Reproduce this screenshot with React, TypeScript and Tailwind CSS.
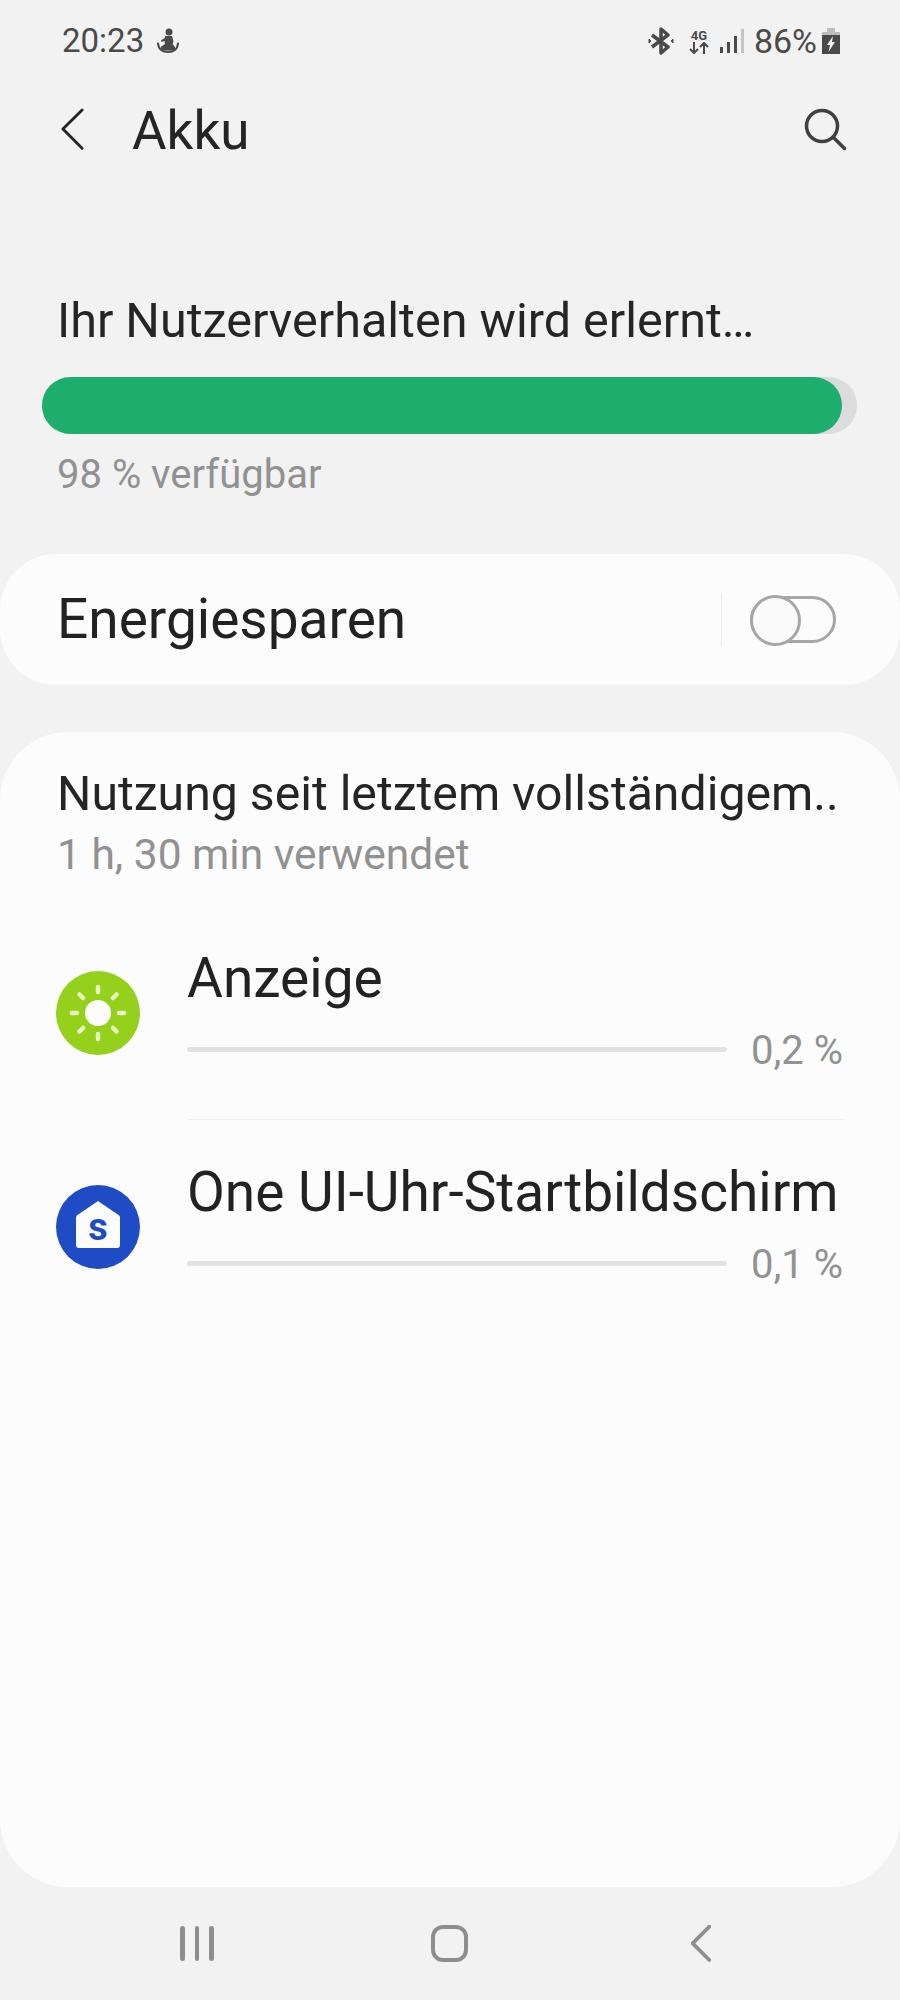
const Back = ({ className, width, stroke = 3 }: { className: string; width: number; stroke?: number }) => (
  <svg viewBox="0 0 24 44" width={width} className={className} fill="none" stroke="currentColor" strokeWidth={stroke} strokeLinecap="round" strokeLinejoin="round">
    <path d="M22 2 2 22l20 20" />
  </svg>
)

const StatusBar = () => (
  <div className="flex h-[61px] items-end justify-between pl-[62px] pr-[60px] text-[#4a4a4a]">
    <div className="flex items-center gap-[13px]">
      <span className="text-[33px] leading-[40px]">20:23</span>
      <svg viewBox="0 0 22 26" width="22" height="26" fill="currentColor">
        <circle cx="12" cy="4" r="3.500" />
        <path d="M8 8h7l1.500 5.500-1 2.500 2.500 3 .5 3.500H5L3.500 19l4.500-3-.5-3-3 1-.5-1.800L8 10z" />
        <path d="M1 15.500c.3 5 4 8.500 10 8.500s9.700-3.500 10-8.500" fill="none" stroke="currentColor" strokeWidth="2.200" strokeLinecap="round" />
      </svg>
    </div>
    <div className="flex items-center">
      <svg viewBox="0 0 26 28" width="26" height="28" fill="none" stroke="currentColor" strokeWidth="3.500" className="mr-[15px]">
        <path d="m4 8 16 12-7 6V2l7 6L4 20" strokeLinejoin="round" />
        <path d="M1 12v4l2-2zM25 12v4l-2-2z" fill="currentColor" strokeWidth="1" />
      </svg>
      <div className="mr-[11px] flex w-[20px] flex-col items-center">
        <span className="text-[13px] font-bold leading-[13px]">4G</span>
        <svg viewBox="0 0 20 12" width="20" height="12" fill="none" stroke="currentColor" strokeWidth="2">
          <path d="M5 0v11M1 7l4 4 4-4M15 12V1M11 5l4-4 4 4" />
        </svg>
      </div>
      <svg viewBox="0 0 24 24" width="24" height="24" className="mr-[10px]">
        <rect x="0" y="18" width="3" height="6" fill="currentColor" />
        <rect x="7" y="13" width="3" height="11" fill="currentColor" />
        <rect x="14" y="7" width="3" height="17" fill="currentColor" />
        <rect x="21" y="0" width="3" height="24" fill="#c4c4c4" />
      </svg>
      <span className="text-[34px] leading-[40px]">86%</span>
      <svg viewBox="0 0 18 26" width="18" height="26" className="ml-[5px]">
        <path d="M5 0h8v4h5v3H0V4h5z" fill="#bdbdbd" />
        <path d="M0 7h18v19H0z" fill="currentColor" />
        <path d="M11 8 5 17h3l-1.500 7L13 14h-3z" fill="#f2f2f2" />
      </svg>
    </div>
  </div>
)

const UsageRow = ({ icon, label, value }: { icon: React.ReactNode; label: string; value: string }) => (
  <div className="flex items-center">
    <div className="w-[187px] shrink-0 pl-[56px] pt-[5px]">{icon}</div>
    <div className="flex-1 pr-[57px]">
      <div className="text-[55px] leading-[60px] whitespace-nowrap text-[#222]">{label}</div>
      <div className="mt-[21px] flex items-center justify-between">
        <div className="mb-[4px] h-[5px] w-[540px] rounded-full bg-[#e2e2e2]" />
        <span className="text-[40px] leading-[44px] text-[#929292]">{value}</span>
      </div>
    </div>
  </div>
)

const SunIcon = () => (
  <svg viewBox="0 0 84 84" width="84" height="84">
    <circle cx="42" cy="42" r="42" fill="#95d01c" />
    <circle cx="42" cy="42" r="13" fill="#fcfcfc" />
    <g stroke="#e6f5bf" strokeWidth="4.500" strokeLinecap="round">
      <path d="M42 16v5M42 63v5M16 42h5M63 42h5M23.500 23.500l3.500 3.500M57 57l3.500 3.500M23.500 60.500 27 57M57 27l3.500-3.500" />
    </g>
  </svg>
)

const HomeIcon = () => (
  <div className="relative h-[84px] w-[84px]">
    <svg viewBox="0 0 84 84" width="84" height="84">
      <circle cx="42" cy="42" r="42" fill="#1f4cc4" />
      <path d="M42 16 21.500 30c-1 .8-1.500 1.700-1.500 3v27c0 2 1 3 3 3h38c2 0 3-1 3-3V33c0-1.300-.5-2.200-1.500-3z" fill="#fcfcfc" />
    </svg>
    <span className="absolute inset-x-0 top-[20px] text-center text-[38px] font-bold leading-[44px] text-[#1f4cc4]">s</span>
  </div>
)

export default function App() {
  return (
    <div className="flex h-[2000px] w-[900px] flex-col overflow-hidden bg-[#f2f2f2] font-['Roboto',sans-serif]">
      <StatusBar />
      <div className="mt-[40px] flex h-[60px] items-center justify-between pl-[61px] pr-[53px]">
        <div className="flex items-center">
          <Back width={23} className="mb-[3px] text-[#252525]" />
          <h1 className="ml-[48px] text-[53px] leading-[60px] text-[#252525]">Akku</h1>
        </div>
        <svg viewBox="0 0 44 44" width="44" height="44" fill="none" stroke="#404040" strokeWidth="3.500" strokeLinecap="round" className="mb-[4px]">
          <circle cx="19" cy="19" r="15.500" />
          <path d="m30.500 30.500 11 11" />
        </svg>
      </div>
      <div className="mt-[134px] px-[57px] text-[48.500px] leading-[52px] whitespace-nowrap text-[#252525]">Ihr Nutzerverhalten wird erlernt…</div>
      <div className="mx-[42px] mt-[30px] h-[57px] w-[815px] rounded-full bg-[#dcdcdc]">
        <div className="h-full w-[800px] rounded-full bg-[#1dae6e]" />
      </div>
      <div className="mt-[18px] px-[57px] text-[40px] leading-[46px] text-[#919191]">98 % verfügbar</div>
      <div className="mt-[56px] flex h-[131px] items-center justify-between rounded-[56px] bg-[#fcfcfc] pl-[57px] pr-[64px]">
        <span className="pb-[2px] text-[55px] leading-[60px] text-[#222]">Energiesparen</span>
        <div className="flex items-center">
          <div className="h-[53px] w-px bg-[#ebebeb]" />
          <div className="relative ml-[28px] h-[47px] w-[86px] rounded-full border-[3px] border-[#a6a6a6]">
            <div className="absolute -left-[3px] -top-[4px] h-[51px] w-[51px] rounded-full border-[3px] border-[#a6a6a6] bg-[#fafafa]" />
          </div>
        </div>
      </div>
      <div className="mt-[47px] flex-1 rounded-[68px] bg-[#fcfcfc] pt-[35px]">
        <div className="px-[57px] text-[48.200px] leading-[54px] whitespace-nowrap text-[#252525]">Nutzung seit letztem vollständigem..</div>
        <div className="mt-[11px] px-[57px] text-[42.500px] leading-[46px] text-[#919191]">1 h, 30 min verwendet</div>
        <div className="mt-[70px]">
          <UsageRow icon={<SunIcon />} label="Anzeige" value="0,2 %" />
        </div>
        <div className="mb-[42px] ml-[188px] mr-[57px] mt-[46px] h-px bg-[#efefef]" />
        <UsageRow icon={<HomeIcon />} label="One UI-Uhr-Startbildschirm" value="0,1 %" />
      </div>
      <div className="flex h-[113px] shrink-0 items-center pl-[180px] text-[#8e8e8e]">
        <div className="flex gap-[10px]">
          <div className="h-[35px] w-[4.500px] rounded-full bg-current" />
          <div className="h-[35px] w-[4.500px] rounded-full bg-current" />
          <div className="h-[35px] w-[4.500px] rounded-full bg-current" />
        </div>
        <div className="ml-[217px] h-[37px] w-[37px] rounded-[12px] border-[4.500px] border-current" />
        <Back width={20} stroke={4.5} className="ml-[223px] text-[#8e8e8e]" />
      </div>
    </div>
  )
}
